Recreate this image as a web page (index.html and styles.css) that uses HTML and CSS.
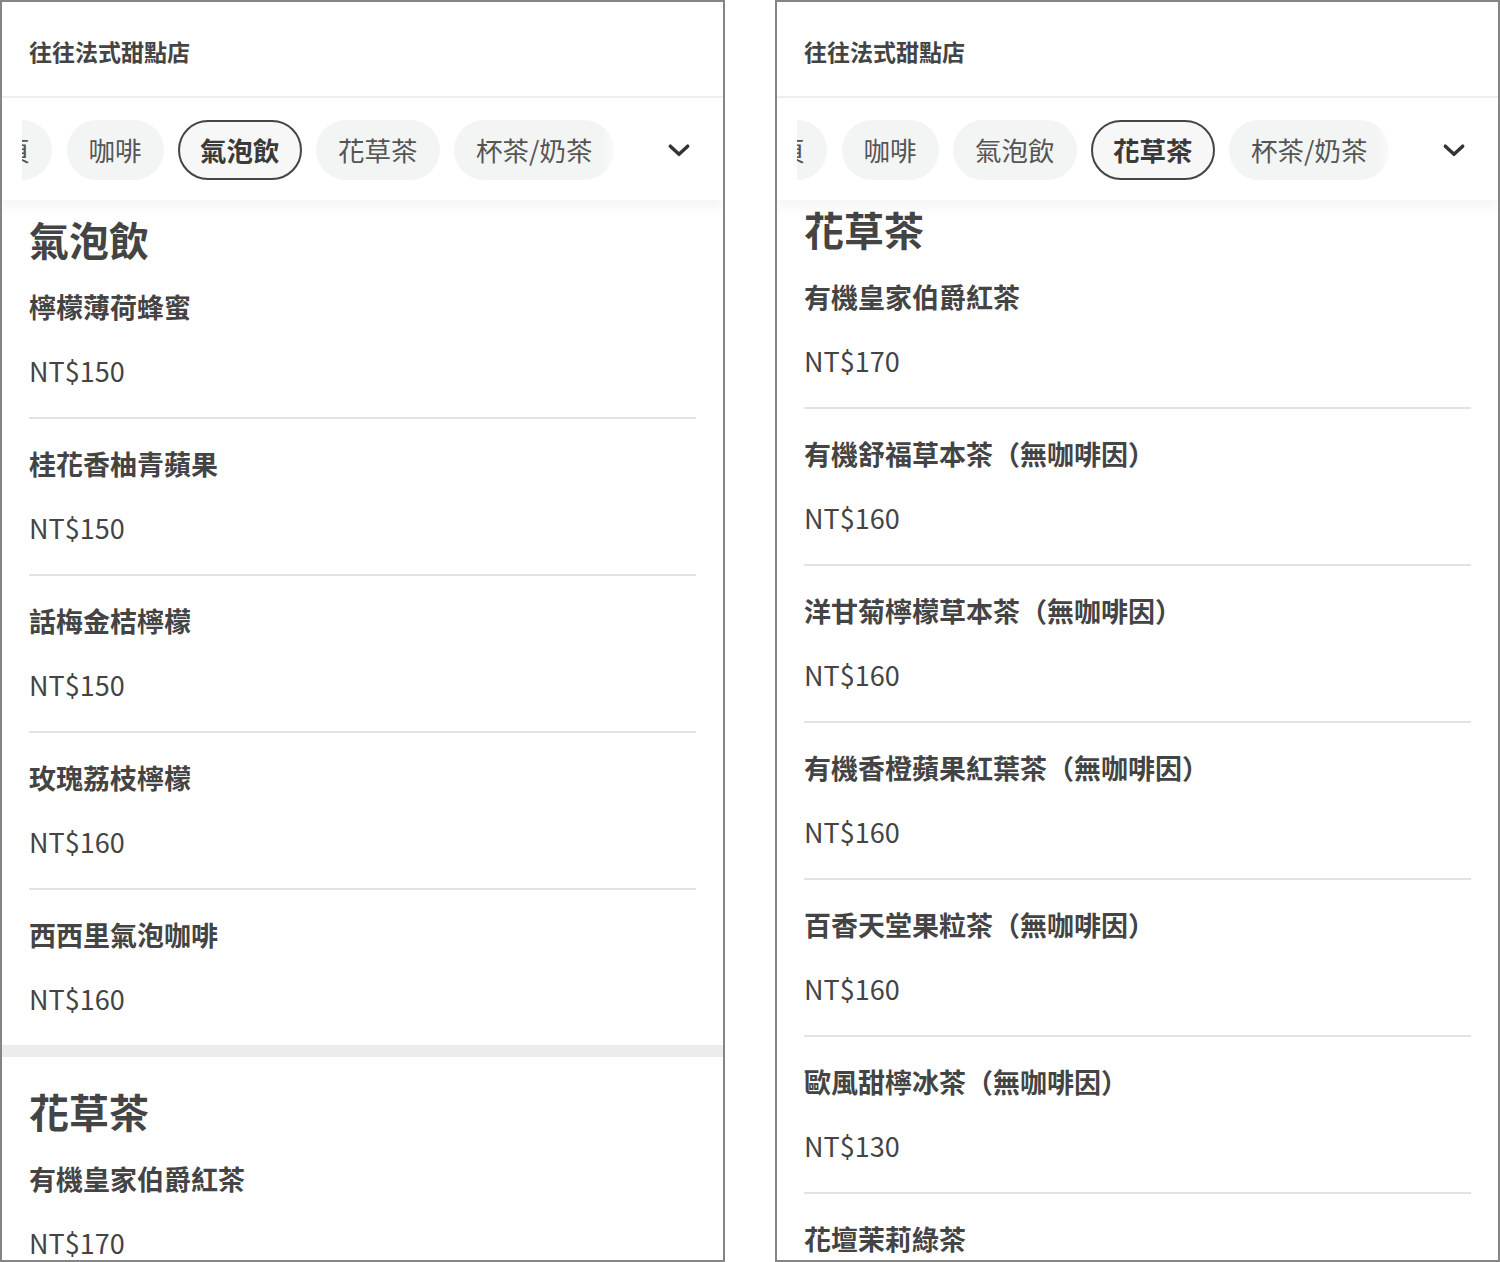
FILE: index.html
```html
<!DOCTYPE html>
<html lang="zh-Hant">
<head>
    <meta charset="UTF-8">
    <meta name="viewport" content="width=device-width, initial-scale=1.0">
    <title>往往法式甜點店</title>
    <link rel="stylesheet" href="styles.css">
</head>
<body>
    <!-- Screen 1: 氣泡飲 selected -->
    <div class="phone">
        <div class="shop-header">往往法式甜點店</div>
        <div class="tab-bar">
            <div class="tab-scroll">
                <div class="tab-row">
                    <span class="chip">首頁</span>
                    <span class="chip">咖啡</span>
                    <span class="chip active">氣泡飲</span>
                    <span class="chip">花草茶</span>
                    <span class="chip">杯茶/奶茶</span>
                    <span class="chip">甜點</span>
                </div>
            </div>
            <div class="tab-more">
                <svg width="26" height="26" viewBox="0 0 24 24"><polyline points="4,8.5 12,16 20,8.5" fill="none" stroke="#333" stroke-width="3.2" stroke-linecap="round" stroke-linejoin="round"/></svg>
            </div>
        </div>
        <div class="menu">
            <div class="menu-inner offset-a">
                <div class="section">
                    <h2>氣泡飲</h2>
                    <div class="item"><div class="item-name">檸檬薄荷蜂蜜</div><div class="item-price">NT$150</div></div>
                    <div class="item"><div class="item-name">桂花香柚青蘋果</div><div class="item-price">NT$150</div></div>
                    <div class="item"><div class="item-name">話梅金桔檸檬</div><div class="item-price">NT$150</div></div>
                    <div class="item"><div class="item-name">玫瑰荔枝檸檬</div><div class="item-price">NT$160</div></div>
                    <div class="item"><div class="item-name">西西里氣泡咖啡</div><div class="item-price">NT$160</div></div>
                </div>
                <div class="section">
                    <h2>花草茶</h2>
                    <div class="item"><div class="item-name">有機皇家伯爵紅茶</div><div class="item-price">NT$170</div></div>
                    <div class="item"><div class="item-name">有機舒福草本茶（無咖啡因）</div><div class="item-price">NT$160</div></div>
                </div>
            </div>
        </div>
    </div>

    <!-- Screen 2: 花草茶 selected -->
    <div class="phone">
        <div class="shop-header">往往法式甜點店</div>
        <div class="tab-bar">
            <div class="tab-scroll">
                <div class="tab-row">
                    <span class="chip">首頁</span>
                    <span class="chip">咖啡</span>
                    <span class="chip">氣泡飲</span>
                    <span class="chip active">花草茶</span>
                    <span class="chip">杯茶/奶茶</span>
                    <span class="chip">甜點</span>
                </div>
            </div>
            <div class="tab-more">
                <svg width="26" height="26" viewBox="0 0 24 24"><polyline points="4,8.5 12,16 20,8.5" fill="none" stroke="#333" stroke-width="3.2" stroke-linecap="round" stroke-linejoin="round"/></svg>
            </div>
        </div>
        <div class="menu">
            <div class="menu-inner offset-b">
                <div class="section">
                    <h2>花草茶</h2>
                    <div class="item"><div class="item-name">有機皇家伯爵紅茶</div><div class="item-price">NT$170</div></div>
                    <div class="item"><div class="item-name">有機舒福草本茶（無咖啡因）</div><div class="item-price">NT$160</div></div>
                    <div class="item"><div class="item-name">洋甘菊檸檬草本茶（無咖啡因）</div><div class="item-price">NT$160</div></div>
                    <div class="item"><div class="item-name">有機香橙蘋果紅葉茶（無咖啡因）</div><div class="item-price">NT$160</div></div>
                    <div class="item"><div class="item-name">百香天堂果粒茶（無咖啡因）</div><div class="item-price">NT$160</div></div>
                    <div class="item"><div class="item-name">歐風甜檸冰茶（無咖啡因）</div><div class="item-price">NT$130</div></div>
                    <div class="item"><div class="item-name">花壇茉莉綠茶</div><div class="item-price">NT$160</div></div>
                </div>
            </div>
        </div>
    </div>
</body>
</html>
```

FILE: styles.css
```css
body { margin: 0; padding: 0; background-color: #fff; display: flex; gap: 50px; font-family: "Noto Sans CJK TC", "Noto Sans", sans-serif; color: #444; }

.phone { width: 725px; height: 1262px; box-sizing: border-box; border: 2px solid #858585; display: flex; flex-direction: column; overflow: hidden; background-color: #fff; }

.shop-header { height: 96px; padding: 4px 27px 0; box-sizing: border-box; display: flex; align-items: center; font-size: 23px; font-weight: bold; color: #444; border-bottom: 2px solid #eee; flex-shrink: 0; }

/* Category tabs */
.tab-bar { height: 102px; display: flex; align-items: center; position: relative; z-index: 2; background-color: #fff; box-shadow: 0 8px 12px rgba(0,0,0,0.045); flex-shrink: 0; padding-top: 2px; box-sizing: border-box; }
.tab-scroll { margin-left: 20px; flex: 1; overflow: hidden; }
.tab-row { display: flex; gap: 14.5px; margin-left: -67px; white-space: nowrap; }
.chip {
    height: 60px;
    line-height: 56px;
    padding: 0 20px;
    box-sizing: border-box;
    border: 2px solid transparent;
    border-radius: 30px;
    background-color: #f3f4f4;
    font-size: 26.5px;
    color: #555;
    flex-shrink: 0;
}
.chip.active { border-color: #444; background-color: #f7f7f7; font-weight: bold; color: #3a3a3a; }
.tab-more { width: 98px; height: 100%; display: flex; align-items: center; justify-content: center; flex-shrink: 0; position: relative; background-color: #fff; }
.tab-more::before { content: ""; position: absolute; left: -24px; top: 0; bottom: 0; width: 24px; background: linear-gradient(to right, rgba(255,255,255,0), #fff); }
.tab-more svg { margin-left: 10px; }

/* Menu list */
.menu { flex: 1; overflow: hidden; }
.offset-a { margin-top: -15px; }
.offset-b { margin-top: -25px; }
.section { padding: 31px 27px 0; border-top: 12px solid #ececec; }
.section:first-child { border-top: none; }
.section h2 { margin: 0; font-size: 40px; line-height: 46px; font-weight: bold; color: #444; }
.item { padding: 25px 0 26px; border-bottom: 2px solid #e3e3e3; }
.item:last-child { border-bottom: none; }
.item-name { font-size: 27px; line-height: 40px; font-weight: bold; color: #444; }
.item-price { font-size: 27px; line-height: 40px; margin-top: 24px; color: #444; }
```
